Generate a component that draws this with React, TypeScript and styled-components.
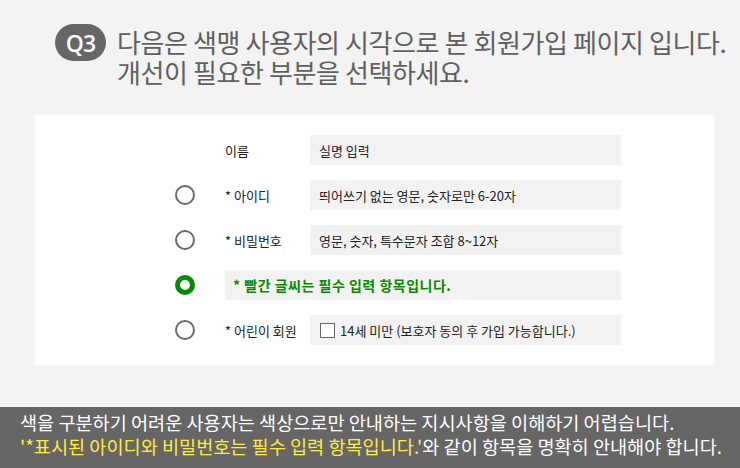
import styled, { createGlobalStyle } from 'styled-components';

const GlobalStyle = createGlobalStyle`
  html, body {
    margin: 0;
    padding: 0;
    background: #f3f3f3;
  }
  body {
    font-family: "Noto Sans CJK KR", "Noto Sans", sans-serif;
  }
`;

const Page = styled.div`
  width: 740px;
  height: 468px;
  display: flex;
  flex-direction: column;
  overflow: hidden;
`;

const Header = styled.div`
  display: flex;
  align-items: flex-start;
  padding: 24px 0 0 55px;
  gap: 11px;
`;

const Badge = styled.div`
  width: 51px;
  height: 37px;
  border-radius: 19px;
  background: #666;
  color: #fff;
  font-family: "Open Sans", "Noto Sans", sans-serif;
  font-weight: 600;
  font-size: 23px;
  letter-spacing: -1px;
  display: flex;
  align-items: center;
  justify-content: center;
  flex-shrink: 0;
`;

const Title = styled.h1`
  margin: 3px 0 0 0;
  font-size: 26px;
  font-weight: 400;
  line-height: 30px;
  letter-spacing: -0.4px;
  color: #606060;
  white-space: nowrap;
`;

const Card = styled.div`
  margin: 28px 0 0 35px;
  width: 680px;
  height: 250px;
  box-sizing: border-box;
  background: #fff;
  padding: 20px 0 20px 140px;
  display: flex;
  flex-direction: column;
  gap: 15px;
`;

const Row = styled.div`
  display: grid;
  grid-template-columns: 50px 85px 311px;
  height: 30px;
  align-items: center;
  font-size: 13px;
  color: #222;
`;

const Radio = styled.span<{ $on?: boolean }>`
  grid-column: 1;
  width: 20px;
  height: 20px;
  box-sizing: border-box;
  border-radius: 50%;
  border: ${p => (p.$on ? '5px solid #008c00' : '2px solid #6a6a6a')};
`;

const Label = styled.span`
  grid-column: 2;
`;

const Field = styled.div<{ $wide?: boolean }>`
  grid-column: ${p => (p.$wide ? '2 / 4' : '3')};
  height: 30px;
  background: #f2f2f2;
  display: flex;
  align-items: center;
  padding-left: ${p => (p.$wide ? '8px' : '9px')};
  gap: 5px;
  color: #222;
`;

const Notice = styled.span`
  color: #0a8a00;
  font-weight: 700;
  font-size: 14px;
  letter-spacing: 0.5px;
`;

const Check = styled.span`
  width: 15px;
  height: 15px;
  box-sizing: border-box;
  border: 1px solid #666;
  background: #fff;
  margin-left: 1px;
`;

const Footer = styled.div`
  margin-top: 42px;
  flex: 1;
  background: #666;
  padding: 3px 0 0 20px;
  color: #fff;
  font-size: 18.6px;
  line-height: 24px;
  white-space: nowrap;
`;

const Highlight = styled.span`
  color: #ffec3d;
`;

export default function App() {
  return (
    <Page>
      <GlobalStyle />
      <Header>
        <Badge>Q3</Badge>
        <Title>
          다음은 색맹 사용자의 시각으로 본 회원가입 페이지 입니다.
          <br />
          개선이 필요한 부분을 선택하세요.
        </Title>
      </Header>
      <Card>
        <Row>
          <Label>이름</Label>
          <Field>실명 입력</Field>
        </Row>
        <Row>
          <Radio />
          <Label>* 아이디</Label>
          <Field>띄어쓰기 없는 영문, 숫자로만 6-20자</Field>
        </Row>
        <Row>
          <Radio />
          <Label>* 비밀번호</Label>
          <Field>영문, 숫자, 특수문자 조합 8~12자</Field>
        </Row>
        <Row>
          <Radio $on />
          <Field $wide>
            <Notice>* 빨간 글씨는 필수 입력 항목입니다.</Notice>
          </Field>
        </Row>
        <Row>
          <Radio />
          <Label>* 어린이 회원</Label>
          <Field>
            <Check />
            14세 미만 (보호자 동의 후 가입 가능합니다.)
          </Field>
        </Row>
      </Card>
      <Footer>
        색을 구분하기 어려운 사용자는 색상으로만 안내하는 지시사항을 이해하기 어렵습니다.
        <br />
        <Highlight>'*표시된 아이디와 비밀번호는 필수 입력 항목입니다.'</Highlight>와 같이 항목을 명확히 안내해야 합니다.
      </Footer>
    </Page>
  );
}
